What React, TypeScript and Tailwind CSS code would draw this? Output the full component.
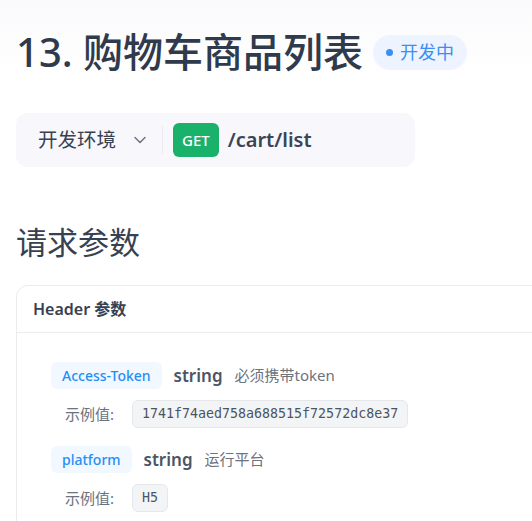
import { ChevronDown } from "lucide-react";

const font = { fontFamily: '"Noto Sans", "Noto Sans CJK SC", sans-serif' };

function Param({ name, desc, example }: { name: string; desc: string; example: string }) {
  return (
    <div className="mb-[18px]">
      <div className="flex items-center">
        <span className="rounded-md bg-[#f2f8ff] px-[11px] py-[3px] text-[14px] font-medium text-[#1f8ff5]">{name}</span>
        <span className="ml-3 text-[17px] font-semibold text-[#4b5563]">string</span>
        <span className="ml-3 text-[15px] text-[#6b7280]">{desc}</span>
      </div>
      <div className="mt-[11px] flex items-center pl-[14px]">
        <span className="w-[67px] text-[15px] text-[#6b7280]">示例值:</span>
        <code className="rounded-md border border-[#e5e7eb] bg-[#f3f4f6] px-[9px] py-[3px] text-[13.3px] text-[#4b5563]" style={{ fontFamily: '"DejaVu Sans Mono", monospace' }}>
          {example}
        </code>
      </div>
    </div>
  );
}

export default function App() {
  return (
    <div className="h-[521px] w-[532px] overflow-hidden bg-white" style={font}>
      <div className="bg-gradient-to-b from-[#fafafc] to-white px-4 pt-[27px]">
        {/* Title */}
        <div className="flex items-center">
          <h1 className="text-[40px] font-medium leading-[50px] text-[#2f3a4c]">13. 购物车商品列表</h1>
          <span className="ml-[10px] flex h-[35px] items-center rounded-full bg-[#edf4ff] px-[13px] text-[18px] text-[#3a8ef6]">
            <span className="mr-[7px] h-[7px] w-[7px] rounded-full bg-[#3a8ef6]" />
            开发中
          </span>
        </div>
      </div>

      <div className="px-4">
        {/* Env bar */}
        <div className="mt-[36px] flex h-[54px] w-[399px] items-center rounded-xl bg-[#f7f7fc] pl-[22px]">
          <span className="text-[19.5px] text-[#374151]">开发环境</span>
          <ChevronDown className="ml-[14px] h-[20px] w-[20px] text-[#6b7280]" strokeWidth={1.7} />
          <span className="ml-[12px] h-[28px] w-px bg-[#ebebf2]" />
          <span className="ml-[10px] flex h-[34px] items-center rounded-md bg-[#1ab16a] px-[9px] text-[15px] font-medium text-white">GET</span>
          <span className="ml-[9px] text-[20px] font-semibold text-[#3a4556]">/cart/list</span>
        </div>

        {/* Request params */}
        <h2 className="mt-[53px] text-[31px] leading-[44px] text-[#374151]">请求参数</h2>

        <div className="mt-[21px] w-[600px] rounded-tl-xl border border-[#ececef]">
          <div className="flex h-[47px] items-center border-b border-[#ececef] px-4 text-[16px] font-semibold text-[#374151]">
            Header 参数
          </div>
          <div className="px-[34px] pt-[29px]">
            <Param name="Access-Token" desc="必须携带token" example="1741f74aed758a688515f72572dc8e37" />
            <Param name="platform" desc="运行平台" example="H5" />
          </div>
        </div>
      </div>
    </div>
  );
}
